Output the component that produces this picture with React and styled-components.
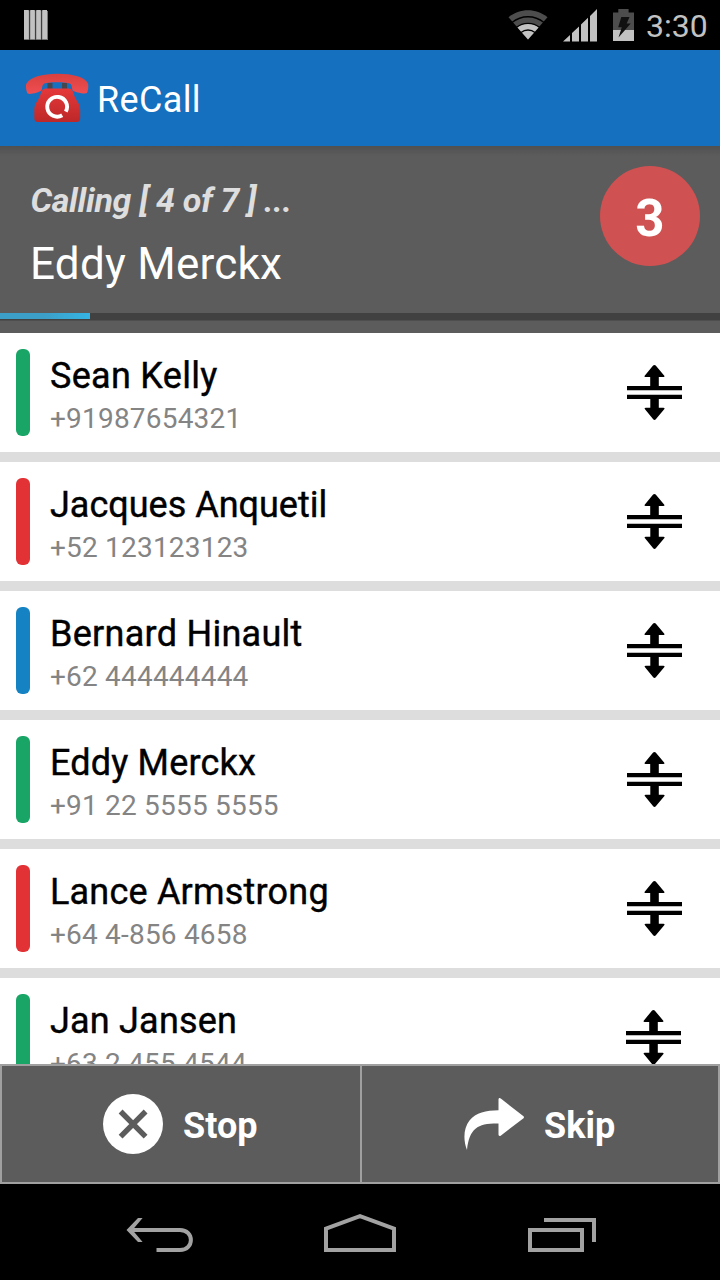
import React from 'react';
import styled, { createGlobalStyle } from 'styled-components';

const contacts = [
  { name: 'Sean Kelly', phone: '+91987654321', color: '#18a566', spacing: 0.3 },
  { name: 'Jacques Anquetil', phone: '+52 123123123', color: '#e23235', spacing: 0 },
  { name: 'Bernard Hinault', phone: '+62 444444444', color: '#1583c3', spacing: 0.27 },
  { name: 'Eddy Merckx', phone: '+91 22 5555 5555', color: '#18a566', spacing: 0.18 },
  { name: 'Lance Armstrong', phone: '+64 4-856 4658', color: '#e23235', spacing: 0.2 },
  { name: 'Jan Jansen', phone: '+63 2 455 4544', color: '#18a566', spacing: 0.2 },
];

const App = () => {
  return (
    <>
      <GlobalStyle />
      <Screen>
        <StatusBar>
          <BarcodeIcon />
          <StatusIcons>
            <WifiIcon />
            <SignalIcon />
            <BatteryIcon />
            <Clock>3:30</Clock>
          </StatusIcons>
        </StatusBar>

        <ActionBar>
          <PhoneLogo />
          <Title>ReCall</Title>
        </ActionBar>

        <CallPanel>
          <CallInfo>
            <div>
              <CallStatus>Calling [ 4 of 7 ] ...</CallStatus>
              <CallName>Eddy Merckx</CallName>
            </div>
            <Counter>3</Counter>
          </CallInfo>
          <Track>
            <Progress style={{ width: `${100 / 8}%` }} />
          </Track>
        </CallPanel>

        <List>
          {contacts.map(({ name, phone, color, spacing }) => (
            <Row key={name}>
              <Marker $color={color} />
              <Contact>
                <Name $spacing={spacing}>{name}</Name>
                <Phone>{phone}</Phone>
              </Contact>
              <DragIcon />
            </Row>
          ))}
        </List>

        <Actions>
          <ActionButton>
            <StopIcon />
            <Label>Stop</Label>
          </ActionButton>
          <ActionButton>
            <SkipIcon />
            <Label>Skip</Label>
          </ActionButton>
        </Actions>

        <NavBar>
          <BackIcon />
          <HomeIcon />
          <RecentIcon />
        </NavBar>
      </Screen>
    </>
  );
};

const BarcodeIcon = () => (
  <svg width="24" height="30" viewBox="0 0 24 30">
    <path fill="#777" d="M0 1h24v29H0z" />
    <path fill="#c2c2c2" d="M0 0h4.800v29H0zM6.200 0h4.600v29H6.200zM12.200 0h4.600v29h-4.600zM18.200 0h4.800v29h-4.800z" />
    <path stroke="#333" strokeWidth="0.9" d="M5.600 0v30M11.600 0v30M17.600 0v30" />
  </svg>
);

const WifiIcon = () => (
  <svg width="40" height="30" viewBox="0 0 40 30">
    <path fill="#4d4d4d" d="M0.500 7.300C12-2 28-2 39.500 7.300L20 29.500z" />
    <path fill="#c2c2c2" d="M9.200 17.200C15.500 12.400 24.500 12.400 30.800 17.200L20 29.500z" />
    <g fill="none" stroke="#000" strokeWidth="1.3">
      <path d="M4 12.600C13.500 4.800 26.500 4.800 36 12.600" />
      <path d="M8.300 17.600C15 11.900 25 11.900 31.700 17.600" />
      <path d="M13 22.400C17 19.200 23 19.200 27 22.400" />
    </g>
  </svg>
);

const SignalIcon = () => (
  <svg width="34" height="33" viewBox="0 0 34 33">
    <path fill="#c2c2c2" d="M0 32.500L7 26v6.500zM9 24l7-6.600v15.100H9zM18 15.500l7-6.700v23.700h-7zM27 6.900L34 0v32.500h-7z" />
  </svg>
);

const BatteryIcon = () => (
  <svg width="21" height="32" viewBox="0 0 21 32">
    <path fill="#4d4d4d" d="M0 3.500h5.300V0h10.300v3.500H21V21H0z" />
    <path fill="#c2c2c2" d="M0 21h21v11H0z" />
    <path fill="#111" d="M8.300 8h8.200l-2.800 6.600h4L5.500 28.600l3.300-10.400H5.200z" />
  </svg>
);

const PhoneLogo = () => (
  <svg width="64" height="50" viewBox="0 0 64 50">
    <defs>
      <linearGradient id="handset" x1="0" y1="0" x2="0" y2="1">
        <stop offset="0" stopColor="#d9403f" />
        <stop offset="1" stopColor="#f04e52" />
      </linearGradient>
      <linearGradient id="base" x1="0" y1="0" x2="0" y2="1">
        <stop offset="0" stopColor="#e5383a" />
        <stop offset="1" stopColor="#bd2828" />
      </linearGradient>
    </defs>
    <path fill="#45474e" d="M22.500 10h5v7h-5zM37 10h5v7h-5z" />
    <path
      fill="url(#base)"
      d="M21 15.500h22.500c4 0 4.500 3 5.500 6.500 1.800 5.500 6.200 8.500 6.200 14.500V45c0 2.700-1 4-3.700 4H13c-2.700 0-3.700-1.300-3.700-4v-8.500c0-6 4.200-9 6-14.500 1.200-3.500 1.700-6.500 5.700-6.500z"
    />
    <path
      fill="url(#handset)"
      d="M1.200 11C5 4 17 .7 32.500 .7S60 4 63 10.500c.6 2 .2 8-1.200 9.500-2 1.500-12.500-1-14-2.500-1.200-1.600-.3-4.600-2-6.300-2.500-2.500-25-2.500-27.500 0-1.700 1.700-.8 4.700-2 6.300-1.500 1.700-11.500 4.400-13.500 3.100C1.400 19.400.5 13 1.200 11z"
    />
    <path fill="none" stroke="#fff" strokeWidth="3.900" d="M37.200 42.300A9.900 9.900 0 1 1 40.800 38.600" />
  </svg>
);

const DragIcon = () => (
  <svg width="56" height="56" viewBox="0 0 56 56">
    <path d="M0 21h23.200v-9h-4.600c-1.200 0-1.400-.8-.7-1.600L26.100.6c.8-.9 1.800-.9 2.600 0l8.400 9.800c.7.8.4 1.600-.7 1.600h-4.600v9H55v4.200H0zM0 29.800h55V34H31.800v8.700h4.700c1.100 0 1.400.8.7 1.600l-8.400 9.900c-.8.900-1.800.9-2.600 0L18 44.300c-.7-.8-.4-1.600.7-1.600h4.600V34H0z" />
  </svg>
);

const StopIcon = () => (
  <svg width="60" height="60" viewBox="0 0 60 60">
    <circle cx="30" cy="30" r="30" fill="#fff" />
    <path stroke="#5c5c5c" strokeWidth="5.400" d="M17.600 17.500l25 25.200M42.600 17.500l-25 25.200" />
  </svg>
);

const SkipIcon = () => (
  <svg width="60" height="60" viewBox="0 0 60 60">
    <path
      fill="#fff"
      d="M34.500 5.600c0-1.600 1-2.100 2.300-1.100l22.400 17.600c1 .8 1 1.700 0 2.500L37 41.400c-1.400 1.100-2.500.5-2.500-1.100v-10.700C14 29.300 5.500 34 3 56 -1 46-.5 34 5.500 26.500 12 18.500 22 16.500 34.500 16.300z"
    />
  </svg>
);

const BackIcon = () => (
  <svg width="66" height="44" viewBox="0 -4 66 44">
    <path fill="none" stroke="#a2a2a2" strokeWidth="4" d="M3.500 14H54c14.500 0 14.500 20 0 20H30.500" />
    <path fill="#a2a2a2" d="M12 2h4.600L6.500 14l10.100 12H12L0.500 14z" />
  </svg>
);

const HomeIcon = () => (
  <svg width="72" height="44" viewBox="0 -4 72 44">
    <path fill="none" stroke="#a2a2a2" strokeWidth="4" d="M2 12.600L36 0.200l34 12.400V34H2z" />
  </svg>
);

const RecentIcon = () => (
  <svg width="68" height="44" viewBox="0 -4 68 44">
    <path fill="none" stroke="#a2a2a2" strokeWidth="4" d="M2 14h52v20H2zM16 4h50v22" />
  </svg>
);

const GlobalStyle = createGlobalStyle`
  * {
    box-sizing: border-box;
  }
  body {
    margin: 0;
    background: #000;
    font-family: Roboto, sans-serif;
  }
  svg {
    display: block;
    flex-shrink: 0;
    overflow: visible;
  }
`;

const Screen = styled.div`
  display: flex;
  flex-direction: column;
  width: 720px;
  height: 1280px;
  overflow: hidden;
`;

const StatusBar = styled.header`
  display: flex;
  justify-content: space-between;
  align-items: center;
  height: 50px;
  padding: 0 12px 0 24px;
  background: #000;
`;

const StatusIcons = styled.div`
  display: flex;
  align-items: center;

  svg:nth-child(2) {
    margin-left: 15px;
  }
  svg:nth-child(3) {
    margin-left: 16px;
  }
`;

const Clock = styled.span`
  width: 62px;
  margin-left: 12px;
  padding-top: 2px;
  color: #c2c2c2;
  font-size: 32px;
  line-height: 48px;
  white-space: nowrap;
`;

const ActionBar = styled.div`
  display: flex;
  align-items: center;
  height: 96px;
  padding: 0 25px;
  background: #1570c0;
`;

const Title = styled.h1`
  margin: 3px 0 0 8px;
  color: #fff;
  font-size: 36px;
  font-weight: 400;
  line-height: 42px;
  letter-spacing: 0.35px;
`;

const CallPanel = styled.section`
  height: 187px;
  background: linear-gradient(#505050, #5c5c5c 10px);
`;

const CallInfo = styled.div`
  display: flex;
  justify-content: space-between;
  height: 167px;
  padding: 20px 20px 0 30px;
`;

const CallStatus = styled.p`
  margin: 13px 0 0 0.5px;
  color: #dedede;
  font-size: 34px;
  font-style: italic;
  font-weight: 700;
  line-height: 42px;
  letter-spacing: -0.31px;
`;

const CallName = styled.p`
  margin: 17px 0 0;
  color: #fff;
  font-size: 44px;
  line-height: 52px;
  letter-spacing: 0.25px;
`;

const Counter = styled.div`
  width: 100px;
  height: 100px;
  border-radius: 50%;
  background: #d05152;
  color: #fff;
  font-size: 51px;
  font-weight: 700;
  line-height: 105px;
  text-align: center;
`;

const Track = styled.div`
  height: 8px;
  border-bottom: 1px solid #4e4e4e;
  background: #414141;
`;

const Progress = styled.div`
  height: 6px;
  background: linear-gradient(90deg, #3c9fc8, #3c9fc8 50%, #35b5e5);
`;

const List = styled.div`
  display: flex;
  flex: 1;
  flex-direction: column;
  gap: 10px;
  min-height: 0;
  overflow: hidden;
  background: #ddd;
`;

const Row = styled.div`
  display: flex;
  flex-shrink: 0;
  height: 119px;
  padding: 16px 37px 16px 16px;
  background: #fff;

  svg {
    margin-top: 16px;
  }
  &:last-child {
    padding-right: 38px;
  }
`;

const Marker = styled.div`
  width: 14px;
  height: 87px;
  border-radius: 6px;
  background: ${({ $color }) => $color};
`;

const Contact = styled.div`
  flex: 1;
  padding: 4px 0 0 20px;
`;

const Name = styled.div`
  color: #000;
  font-size: 36px;
  line-height: 46px;
  letter-spacing: ${({ $spacing }) => $spacing}px;
  -webkit-text-stroke: 0.4px #000;
`;

const Phone = styled.div`
  margin-top: 3px;
  color: #848484;
  font-size: 28px;
  line-height: 34px;
  letter-spacing: 0.2px;
`;

const Actions = styled.div`
  display: flex;
  height: 120px;
  border: 2px solid #a0a0a0;
  background: #5c5c5c;
`;

const ActionButton = styled.button`
  display: flex;
  flex: none;
  align-items: center;
  width: 358px;
  gap: 20px;
  padding: 0 0 0 101px;
  border: 0;
  background: none;
  color: #fff;
  font-family: inherit;

  & + & {
    padding-left: 102px;
    border-left: 2px solid #a0a0a0;
  }
`;

const Label = styled.span`
  padding-top: 4px;
  font-size: 36px;
  font-weight: 700;
  line-height: 42px;
`;

const NavBar = styled.nav`
  display: flex;
  justify-content: space-between;
  height: 96px;
  padding: 28px 124px 0 126px;
  background: #000;
`;

export default App;
